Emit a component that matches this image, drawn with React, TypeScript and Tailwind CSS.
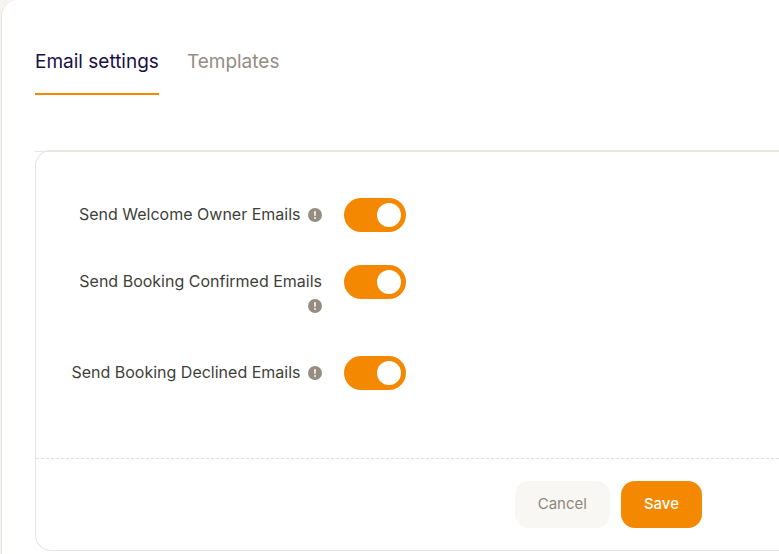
import { useState } from "react";

const settings = [
  { id: "welcome-owner", label: "Send Welcome Owner Emails" },
  { id: "booking-confirmed", label: "Send Booking Confirmed Emails" },
  { id: "booking-declined", label: "Send Booking Declined Emails" },
];

function InfoIcon() {
  return (
    <svg viewBox="0 0 14 14" className="ml-[3px] inline-block size-[14px] align-[-2px]" aria-hidden="true">
      <circle cx="7" cy="7" r="7" fill="#958d81" />
      <path d="M6.1 3.2h1.8L7.6 8H6.4z" fill="#fff" />
      <circle cx="7" cy="10" r="0.9" fill="#fff" />
    </svg>
  );
}

function SettingRow({ id, label }: { id: string; label: string }) {
  const [on, setOn] = useState(true);
  return (
    <div className="flex items-start gap-[22px]">
      <label htmlFor={id} className="w-[252px] pb-[6px] pt-1 text-right text-base text-[#3f3f3a]">
        {label} <InfoIcon />
      </label>
      <input
        id={id}
        type="checkbox"
        role="switch"
        checked={on}
        onChange={() => setOn(!on)}
        className="flex h-[34px] w-[62px] shrink-0 cursor-pointer appearance-none items-center rounded-full bg-[#d8d6cf] px-[5px] before:size-6 before:rounded-full before:bg-white checked:justify-end checked:bg-[#f48800]"
      />
    </div>
  );
}

export default function App() {
  return (
    <div className="min-h-screen overflow-hidden bg-[#f5f4f1] pl-px font-['Inter',sans-serif]">
      <main className="min-h-screen rounded-tl-2xl border-l border-[#e6e5e0] bg-white pb-[3px] pl-[33px] pt-10">
        <nav className="flex gap-7 border-b border-[#e6e5df] pb-14 text-[19px]">
          <a href="#settings" aria-current="page" className="border-b-2 border-[#f48800] pb-[17px] pt-2 leading-7 text-[#1b1046]">
            Email settings
          </a>
          <a href="#templates" className="pb-[17px] pt-2 leading-7 text-[#958d81]">
            Templates
          </a>
        </nav>
        <form className="-mt-[2px] rounded-l-2xl border border-r-0 border-[#e6e5df]" onSubmit={(e) => e.preventDefault()}>
          <div className="flex flex-col gap-[33px] pb-[68px] pl-[34px] pt-[47px]">
            {settings.map((s) => (
              <SettingRow key={s.id} {...s} />
            ))}
          </div>
          <footer className="flex justify-end gap-[11px] border-t border-dashed border-[#e0ded6] py-[22px] pr-[77px] text-[15px]">
            <button type="button" className="h-[47px] rounded-[14px] bg-[#f8f7f3] px-[23px] text-[#8f877b]">
              Cancel
            </button>
            <button type="submit" className="h-[47px] rounded-[14px] bg-[#f48800] px-[23px] font-medium text-white">
              Save
            </button>
          </footer>
        </form>
      </main>
    </div>
  );
}
